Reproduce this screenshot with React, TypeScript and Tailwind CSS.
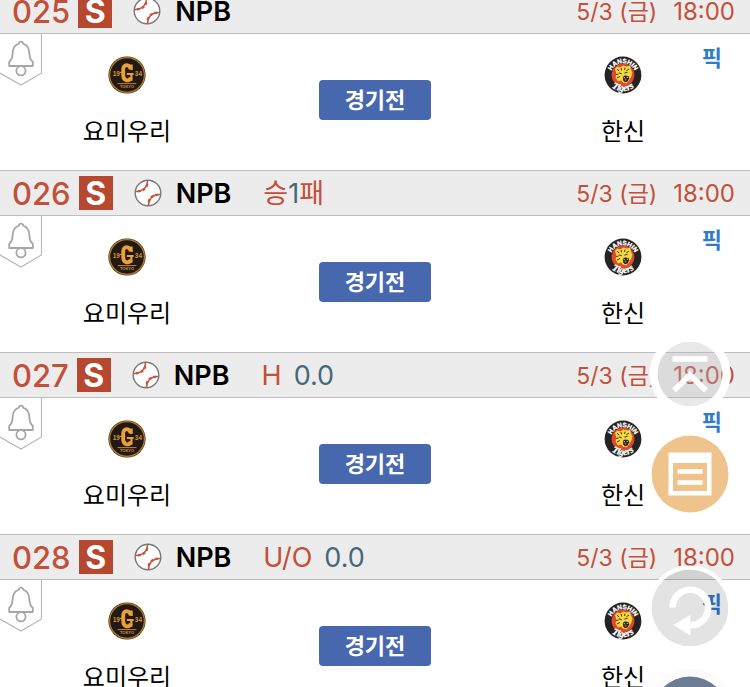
import { useState } from "react";

type Part = { text: string; tone: "red" | "blue"; gap?: boolean };

type Game = {
  no: string;
  league: string;
  handicap: Part[];
  date: string;
  time: string;
  home: string;
  away: string;
};

const base = { league: "NPB", date: "5/3 (금)", time: "18:00", home: "요미우리", away: "한신" };

const games: Game[] = [
  { no: "025", handicap: [], ...base },
  {
    no: "026",
    handicap: [
      { text: "승", tone: "red" },
      { text: "1", tone: "blue" },
      { text: "패", tone: "red" },
    ],
    ...base,
  },
  {
    no: "027",
    handicap: [
      { text: "H", tone: "red" },
      { text: "0.0", tone: "blue", gap: true },
    ],
    ...base,
  },
  {
    no: "028",
    handicap: [
      { text: "U/O", tone: "red" },
      { text: "0.0", tone: "blue", gap: true },
    ],
    ...base,
  },
];

function Baseball() {
  return (
    <svg viewBox="0 0 28 28" className="size-7 shrink-0" fill="none">
      <circle cx="14" cy="14" r="12.8" fill="#fff" stroke="#777" strokeWidth="1.4" />
      <g stroke="#c4583e" strokeWidth="1.5">
        <path d="M13.5 1.8C13.5 8 9 12.6 2 12.4" />
        <path d="M14.5 26.2C14.5 20 19 15.4 26 15.6" />
      </g>
      <g stroke="#c4583e" strokeWidth="2.4" strokeDasharray="3 2">
        <path d="M13.3 5C12.5 9 9 12.2 4 12.4" />
        <path d="M14.7 23C15.5 19 19 15.8 24 15.6" />
      </g>
    </svg>
  );
}

function GiantsLogo() {
  return (
    <svg viewBox="0 0 38 38" className="size-[38px]">
      <circle cx="19" cy="19" r="18.6" fill="#3b2c18" />
      <circle cx="19" cy="19" r="17.4" fill="#201915" stroke="#b47a24" strokeWidth="1.3" />
      <g fill="#d9952f" fontFamily="Liberation Sans, sans-serif" fontWeight="700" textAnchor="middle">
        <text x="8.2" y="19.6" fontSize="6.4">19</text>
        <text x="30.4" y="19.6" fontSize="6.4">34</text>
        <text x="19" y="32" fontSize="4">TOKYO</text>
      </g>
      <g fill="none" stroke="#eba136">
        <path d="M22.8 13.4C21.8 7.8 15.2 7.6 15.2 13.5v5.5c0 6.4 6.2 6.8 7.6 2.6" strokeWidth="3.8" />
        <path d="M18.8 18h6.8M23.4 17.6v7.2M23.6 8.6v5.4" strokeWidth="2.2" />
        <path d="M12.2 16.4h5" strokeWidth="1.2" />
        <path d="M9.6 27.6h18.8" strokeWidth="0.8" />
      </g>
    </svg>
  );
}

function TigersLogo({ id }: { id: string }) {
  return (
    <svg viewBox="0 0 38 38" className="size-[38px]">
      <defs>
        <path id={`${id}-top`} d="M6.6 19.5a12.4 12.4 0 0 1 24.8 0" />
        <path id={`${id}-bottom`} d="M1.8 18a17.2 17.2 0 0 0 34.4 0" />
      </defs>
      <circle cx="19" cy="19" r="18.4" fill="#252323" />
      <circle cx="19" cy="19" r="11.4" fill="#e2492b" />
      <g fill="#fff" stroke="#fff" strokeWidth="0.3" fontWeight="700" textAnchor="middle">
        <text fontSize="6.4" fontFamily="Liberation Sans, sans-serif">
          <textPath href={`#${id}-top`} startOffset="50%">HANSHIN</textPath>
        </text>
        <text fontSize="9.5" fontStyle="italic" fontFamily="Liberation Serif, serif">
          <textPath href={`#${id}-bottom`} startOffset="50%">Tigers</textPath>
        </text>
      </g>
      <path
        d="M11 13l2.2-2.6 3 1 3.2-1.8 3.4 1 3.4-.8.6 3.4 1.6 3.4-1 4-2.2 3.6-2.6 3-3.6-.4-1.8-2.2-3.2.8-2.4-3.8.8-4z"
        fill="#f5d83c"
      />
      <g fill="none" stroke="#252323" strokeWidth="0.9">
        <path d="M13 13.2l2.2 1.8M17 12l.6 2.4M21 11.6l-.4 2.4M25 13l-2.6 1.8M12.2 18.6l2.4-.6M13 22l3-1.6M14.8 16.8l3 1M20.4 17.2l3.2-1" />
      </g>
      <path d="M18.8 21l2-1.6 3.6.6.8 2.2-1.6 3.4-2.8.6-1.6-2z" fill="#252323" />
      <path d="M20.4 23l1.8-.6.4 1.4-1.4 1.2z" fill="#e2492b" />
      <path d="M20 21l.6 1.2M23.4 20.8l-.2 1.2" stroke="#fff" strokeWidth="0.8" />
    </svg>
  );
}

function AlarmButton({ label }: { label: string }) {
  const [on, setOn] = useState(false);
  return (
    <button
      type="button"
      aria-label={label}
      aria-pressed={on}
      onClick={() => setOn(!on)}
      className="absolute left-0 top-0"
    >
      <svg viewBox="0 0 42 52" className="h-[52px] w-[42px]" fill="none">
        <path d="M41.5 0v39L21 51 0 39" stroke="#b5b5b5" strokeWidth="1.1" />
        <g stroke="#a6a6a6" strokeWidth="1.8" strokeLinejoin="round">
          <path
            d="M9.2 32v-4.2c2.8-1.6 3.2-4.6 3.4-8.4.2-5.4 2.2-8.6 6.2-9.8.2-1.4 1-2 2.2-2s2 .6 2.2 2c4 1.2 6 4.4 6.2 9.8.2 3.8.6 6.8 3.4 8.4V32z"
            fill={on ? "#a6a6a6" : "none"}
          />
          <circle cx="21" cy="36.8" r="4.6" fill="#fff" />
        </g>
      </svg>
    </button>
  );
}

function Team({ name, logo }: { name: string; logo: React.ReactNode }) {
  return (
    <div className="flex flex-1 flex-col items-center gap-[22px]">
      {logo}
      <span className="text-2xl leading-8 text-black">{name}</span>
    </div>
  );
}

function GameRow({ game }: { game: Game }) {
  return (
    <li>
      <div className="flex h-[46px] items-center border-y border-[#bdbdbd] bg-[#ececec] pl-3 pr-[15px] whitespace-nowrap">
        <span className="pt-0.5 text-[31px] leading-8 font-medium text-[#c2503a]">{game.no}</span>
        <span className="ml-2 flex size-[34px] items-center justify-center bg-[#b5482e] pt-0.5 text-[32px] leading-8 font-bold text-white">
          S
        </span>
        <div className="ml-[21px] flex items-center gap-3.5">
          <Baseball />
          <span className="pt-0.5 text-[27px] leading-8 font-semibold text-black">{game.league}</span>
        </div>
        <div className="ml-8 flex items-center pt-0.5 text-[27px] leading-8">
          {game.handicap.map((part) => (
            <span
              key={part.text}
              className={`${part.tone === "red" ? "text-[#c2503a]" : "text-[#46687b]"} ${part.gap ? "ml-3" : ""}`}
            >
              {part.text}
            </span>
          ))}
        </div>
        <div className="ml-auto flex items-center gap-4 pt-0.5 leading-8 text-[#c2503a]">
          <span className="text-[23px]">{game.date}</span>
          <span className="text-2xl leading-8">{game.time}</span>
        </div>
      </div>
      <div className="relative flex h-[136px] px-[3px] pt-[22px]">
        <AlarmButton label={`${game.no} 알림`} />
        <Team name={game.home} logo={<GiantsLogo />} />
        <div className="flex flex-1 items-start justify-center pt-6">
          <button
            type="button"
            className="h-10 w-28 rounded-sm bg-[#4768ae] text-[22px] leading-8 font-bold text-white"
          >
            경기전
          </button>
        </div>
        <Team name={game.away} logo={<TigersLogo id={`tigers-${game.no}`} />} />
        <a href="#pick" className="absolute right-7 top-2 text-[22px] leading-8 font-bold text-[#2f7bd0]">
          픽
        </a>
      </div>
    </li>
  );
}

// floating shortcuts on the right edge
function QuickMenu() {
  return (
    <nav className="fixed top-[333px] right-3.5 flex w-[92px] flex-col items-center">
      <button type="button" aria-label="맨 위로">
        <svg viewBox="0 0 82 82" className="size-[82px]" fill="none">
          <circle cx="41" cy="41" r="32.5" fill="#b8b8b8" fillOpacity="0.32" />
          <circle cx="41" cy="41" r="36.5" stroke="#fff" strokeWidth="8" />
          <path d="M23.5 26h35" stroke="#fff" strokeWidth="5.6" />
          <path d="M25 57.5l16-15.5 16 15.5" stroke="#fff" strokeWidth="5.6" />
        </svg>
      </button>
      <button type="button" aria-label="목록" className="mt-5">
        <svg viewBox="0 0 78 78" className="size-[78px]" fill="none">
          <circle cx="39" cy="39" r="38.5" fill="#eec48c" />
          <path d="M17.5 17.5h43v43h-43z M22 28v28h34V28z" fill="#fff" fillRule="evenodd" />
          <path d="M26.5 36.5h25M26.5 47.5h25" stroke="#fff" strokeWidth="4.4" />
        </svg>
      </button>
      <button type="button" aria-label="새로고침" className="mt-[52px]">
        <svg viewBox="0 0 86 86" className="size-[86px]" fill="none">
          <circle cx="43" cy="43" r="38.5" fill="#000" fillOpacity="0.11" />
          <circle cx="43" cy="43" r="40.5" stroke="#fff" strokeWidth="4" />
          <path d="M25.6 42.5a17.8 17.8 0 1 1 17.8 17.8" stroke="#fff" strokeWidth="6.6" />
          <path d="M43.5 50v20.5L26.5 60z" fill="#fff" />
        </svg>
      </button>
      <button type="button" aria-label="메뉴" className="mt-[18px]">
        <svg viewBox="0 0 92 92" className="size-[92px]" fill="none">
          <circle cx="46" cy="46" r="46" fill="#fcfafb" />
          <circle cx="46" cy="46" r="38.5" fill="#6b7c94" />
        </svg>
      </button>
    </nav>
  );
}

export default function App() {
  return (
    <main className="h-screen overflow-hidden bg-white font-['Inter','Noto_Sans_CJK_KR',sans-serif]">
      <ul className="-mt-3">
        {games.map((game) => (
          <GameRow key={game.no} game={game} />
        ))}
      </ul>
      <QuickMenu />
    </main>
  );
}
